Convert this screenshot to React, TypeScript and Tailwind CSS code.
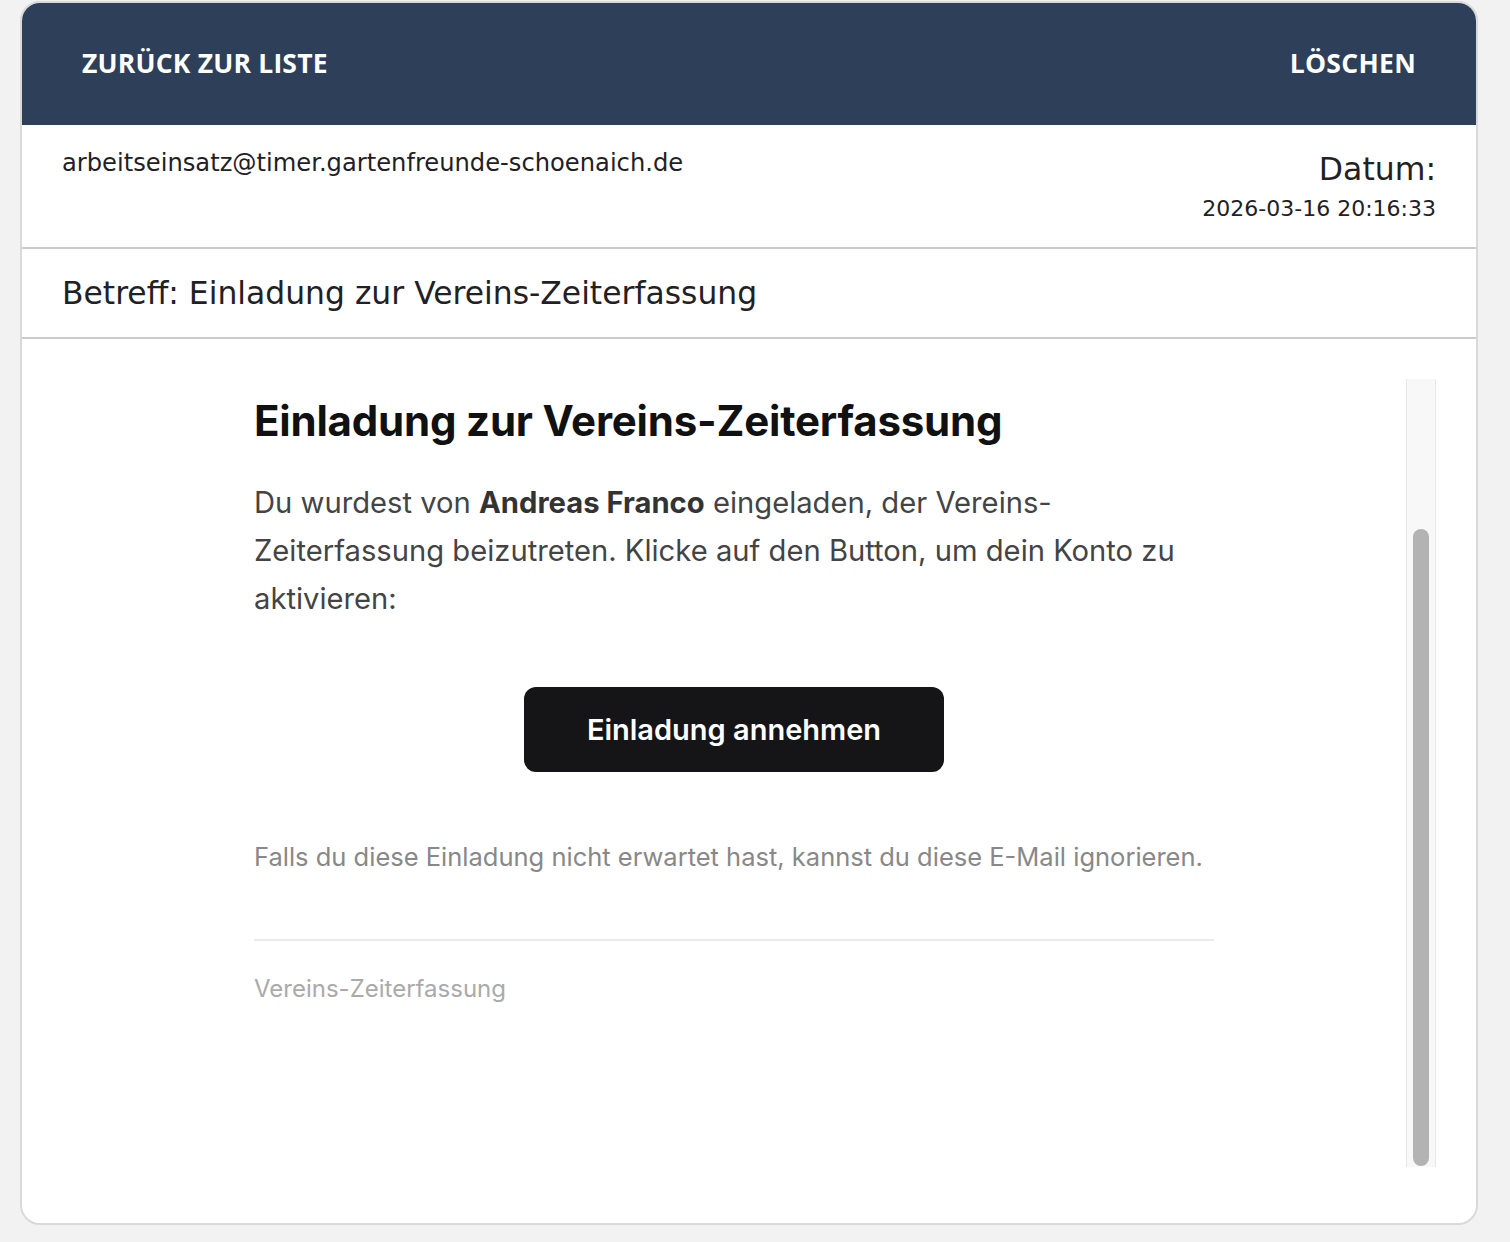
import React from "react";

const ui = { fontFamily: '"Open Sans", "Liberation Sans", sans-serif' };
const meta = { fontFamily: '"DejaVu Sans", "Open Sans", sans-serif' };
const mail = { fontFamily: 'Inter, "Liberation Sans", sans-serif' };

function FakeScrollbar() {
  return (
    <div className="flex w-[30px] shrink-0 flex-col items-center border-x border-[#e8e8e8] bg-[#f8f8f8]">
      <div className="mt-[150px] mb-[1px] w-[16px] flex-1 rounded-full bg-[#b3b3b3]" />
    </div>
  );
}

function MailBody() {
  return (
    <div className="min-w-0 flex-1 overflow-hidden" style={mail}>
      <div className="mx-auto w-[960px] pt-[18px]">
        <h1 className="text-[42px] font-bold leading-[48px] tracking-[-0.2px] text-[#111111]">
          Einladung zur Vereins-Zeiterfassung
        </h1>
        <p className="mt-[34px] text-[29.2px] leading-[48px] text-[#444444]">
          Du wurdest von <strong className="font-bold text-[#333333]">Andreas Franco</strong> eingeladen, der Vereins-Zeiterfassung beizutreten. Klicke auf den Button, um dein Konto zu aktivieren:
        </p>
        <div className="mt-[64px] flex justify-center">
          <a className="flex h-[85px] w-[420px] items-center justify-center rounded-[12px] bg-[#151517] text-[29px] font-semibold text-white">
            Einladung annehmen
          </a>
        </div>
        <p className="mt-[67px] text-[25.5px] leading-[36px] text-[#888888]">
          Falls du diese Einladung nicht erwartet hast, kannst du diese E-Mail ignorieren.
        </p>
        <div className="mt-[64px] h-[2px] bg-[#eaeaea]" />
        <p className="mt-[31px] text-[24px] leading-[33px] text-[#aaaaaa]">Vereins-Zeiterfassung</p>
      </div>
    </div>
  );
}

export default function App() {
  return (
    <div className="min-h-[1242px] bg-[#f2f2f2] pt-[1px]" style={ui}>
      <div className="ml-[20px] w-[1458px] overflow-hidden rounded-[20px] border-2 border-[#d9d9d9] bg-white">
        <header className="flex h-[122px] items-center justify-between bg-[#2d3f59] px-[60px] text-white">
          <button className="text-[26.5px] font-bold tracking-[0.2px]">ZURÜCK ZUR LISTE</button>
          <button className="text-[26.5px] font-bold tracking-[0.3px]">LÖSCHEN</button>
        </header>

        <div className="flex justify-between border-b-2 border-[#cbcbcb] px-[40px] pt-[22px] pb-[22px] text-[#1f2125]" style={meta}>
          <div className="text-[24.2px] leading-[33px]">arbeitseinsatz@timer.gartenfreunde-schoenaich.de</div>
          <div className="flex flex-col items-end">
            <div className="text-[31.5px] leading-[45px]">Datum:</div>
            <div className="text-[22px] leading-[33px]">2026-03-16 20:16:33</div>
          </div>
        </div>

        <div className="border-b-2 border-[#cbcbcb] px-[40px] py-[20px] text-[31.4px] leading-[48px] text-[#1f2125]" style={meta}>
          Betreff: Einladung zur Vereins-Zeiterfassung
        </div>

        <div className="px-[40px] pt-[40px] pb-[56px]">
          <div className="flex h-[788px]">
            <MailBody />
            <FakeScrollbar />
          </div>
        </div>
      </div>
    </div>
  );
}
